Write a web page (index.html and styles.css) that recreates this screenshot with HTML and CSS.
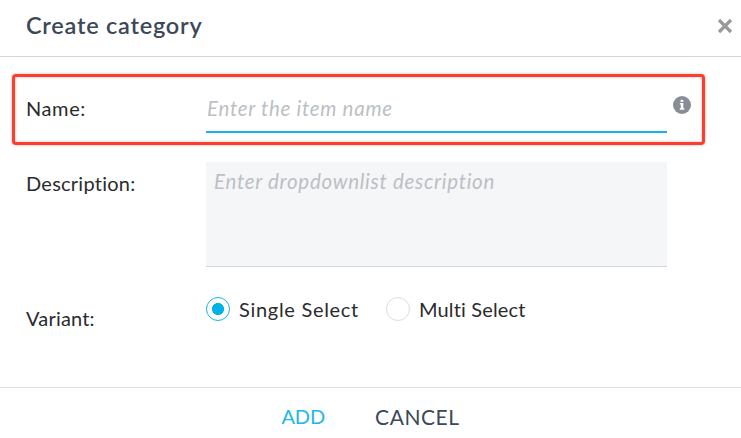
FILE: index.html
```html
<!DOCTYPE html>
<html lang="en">
<head>
  <meta charset="UTF-8" />
  <meta name="viewport" content="width=device-width, initial-scale=1.0" />
  <title>Create category</title>
  <link rel="stylesheet" href="styles.css">
</head>
<body>
  <form class="dialog">
    <header class="dialog-header">
      <h2>Create category</h2>
      <button class="close" type="button" aria-label="Close">
        <svg width="16" height="16" viewBox="0 0 16 16"><path d="M2 2L14 14M14 2L2 14" stroke="#999" stroke-width="3.2" fill="none"/></svg>
      </button>
    </header>

    <div class="dialog-body">
      <div class="row row-name">
        <label for="name">Name:</label>
        <input class="field" id="name" type="text" placeholder="Enter the item name">
        <svg class="info" width="18" height="18" viewBox="0 0 18 18">
          <circle cx="9" cy="9" r="9" fill="#878c96"/>
          <path d="M7.6 3.7h2.7v2.2H7.6zM6.9 7.1h3.4v5.1h1v1.5H6.8v-1.5h1V8.6h-.9z" fill="#fff"/>
        </svg>
      </div>

      <div class="row row-description">
        <label for="description">Description:</label>
        <textarea class="area" id="description" placeholder="Enter dropdownlist description"></textarea>
      </div>

      <div class="row row-variant">
        <span class="label">Variant:</span>
        <div class="options">
          <label class="option option-single"><input type="radio" name="variant" checked><span>Single Select</span></label>
          <label class="option option-multi"><input type="radio" name="variant"><span>Multi Select</span></label>
        </div>
      </div>
    </div>

    <footer class="dialog-footer">
      <button class="btn btn-add" type="button">ADD</button>
      <button class="btn btn-cancel" type="button">CANCEL</button>
    </footer>
  </form>
</body>
</html>
```
FILE: styles.css
```css
* {
  box-sizing: border-box;
}
body {
  margin: 0;
  background: #fff;
  color: #2b2b2d;
  font-family: Lato, "Liberation Sans", sans-serif;
  font-size: 20px;
  line-height: 24px;
  overflow: hidden;
}
input, textarea, button {
  font: inherit;
  margin: 0;
  padding: 0;
  border: 0;
  background: none;
}
.dialog {
  display: flex;
  flex-direction: column;
  height: 438px;
}
.dialog-header {
  display: flex;
  align-items: center;
  justify-content: space-between;
  height: 57px;
  padding: 0 8px 4px 26px;
  border-bottom: 1px solid #d3d5d6;
}
.dialog-header h2 {
  margin: -2px 0 0;
  color: #3c4858;
  font-size: 23.5px;
  font-weight: 600;
  line-height: 28px;
  letter-spacing: 0.75px;
}
.close {
  display: flex;
}
.dialog-body {
  height: 330px;
  padding: 17px 36px 0 12px;
}
.row {
  display: grid;
  grid-template-columns: 180px 461px auto;
  align-items: start;
  padding-left: 14px;
}
.row-name {
  height: 71px;
  padding: 19px 0 0 11px;
  border: 3px solid #ff3d2b;
  border-radius: 4px;
  box-shadow: 0 0 3px rgba(0, 0, 0, 0.3), inset 0 0 3px rgba(0, 0, 0, 0.25);
}
.row-name label {
  letter-spacing: 0.6px;
}
.field {
  height: 37px;
  padding: 0 1px 12px;
  border-bottom: 2px solid #12b5e5;
  font-size: 20.5px;
  outline: none;
}
.info {
  margin-left: 6px;
}
::placeholder {
  color: #bcbfc4;
  font-style: italic;
  letter-spacing: 0.72px;
  opacity: 1;
}
.row-description {
  margin-top: 17px;
}
.row-description label {
  padding-top: 9px;
  letter-spacing: 0.25px;
}
.area {
  height: 105px;
  padding: 7px 8px;
  background: #f5f6f8;
  border-bottom: 1px solid #d3d6da;
  font-size: 20.5px;
  resize: none;
  outline: none;
}
.row-variant {
  margin-top: 30px;
}
.row-variant .label {
  padding-top: 9px;
  letter-spacing: 0.2px;
}
.options {
  display: flex;
  gap: 27px;
}
.option {
  display: flex;
  gap: 9px;
  white-space: nowrap;
}
.option-single {
  letter-spacing: 0.7px;
}
.option-multi {
  letter-spacing: 0.15px;
}
.option input {
  appearance: none;
  width: 24px;
  height: 24px;
  border: 1px solid #dcdddf;
  border-radius: 50%;
}
.option input:checked {
  border-color: #12b5e5;
  background: radial-gradient(circle, #00b3e6 5.7px, transparent 6.3px);
}
.dialog-footer {
  display: flex;
  justify-content: center;
  gap: 50px;
  height: 51px;
  padding-top: 16px;
  border-top: 1px solid #dcdedf;
}
.btn {
  height: 26px;
  color: #3c4858;
  font-size: 21px;
}
.btn-add {
  height: 24px;
  color: #1cb8e8;
  font-size: 20px;
  letter-spacing: -0.1px;
}
.btn-cancel {
  letter-spacing: 0.55px;
}
```
